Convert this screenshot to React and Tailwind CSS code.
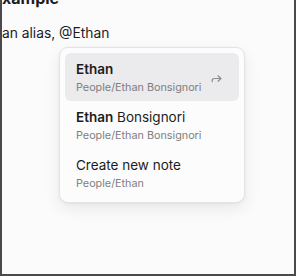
import React from "react";

function ForwardIcon() {
  return (
    <svg width="13" height="13" viewBox="0 0 24 24" fill="none" stroke="currentColor" strokeWidth="2.2" strokeLinecap="round" strokeLinejoin="round">
      <polyline points="15 17 20 12 15 7" />
      <path d="M4 18v-2a4 4 0 0 1 4-4h12" />
    </svg>
  );
}

function Item({ title, bold, rest, sub, active }) {
  return (
    <div className={"flex items-center h-[48px] rounded-[6px] pl-[11px] pr-[16px] " + (active ? "bg-[#ebeaec]" : "")}>
      <div className="flex-1 flex flex-col pt-[1px]">
        <div className="text-[13.5px] leading-[17px] text-[#1c1c1e]">
          <span className="font-semibold">{bold}</span>
          {rest ? <span>{rest}</span> : null}
          {title ? <span>{title}</span> : null}
        </div>
        <div className="text-[10.8px] leading-[15px] text-[#7e7e82] mt-[2px]">{sub}</div>
      </div>
      {active ? (
        <div className="text-[#8c8c90] mt-[2px]">
          <ForwardIcon />
        </div>
      ) : null}
    </div>
  );
}

export default function App() {
  return (
    <div
      className="w-[296px] h-[276px] overflow-hidden bg-[#fcfbfc] border-l-2 border-r-2 border-b-2 border-[#4a4a4c]"
      style={{ fontFamily: "Inter, 'Noto Sans', sans-serif" }}
    >
      <div className="-mt-[12px] text-[16px] leading-[20px] font-bold text-[#1c1c1e]">xample</div>
      <div className="mt-[15px] text-[13.8px] leading-[20px] text-[#1c1c1e]">an alias, @Ethan</div>
      <div className="mt-[4px] ml-[57px] w-[186px] rounded-[9px] border border-[#e4e2e5] bg-[#fdfcfd] p-[5px] shadow-[0_6px_16px_rgba(0,0,0,0.08),0_1px_3px_rgba(0,0,0,0.05)]">
        <Item bold="Ethan" sub="People/Ethan Bonsignori" active />
        <Item bold="Ethan" rest=" Bonsignori" sub="People/Ethan Bonsignori" />
        <Item title="Create new note" sub="People/Ethan" />
      </div>
    </div>
  );
}
